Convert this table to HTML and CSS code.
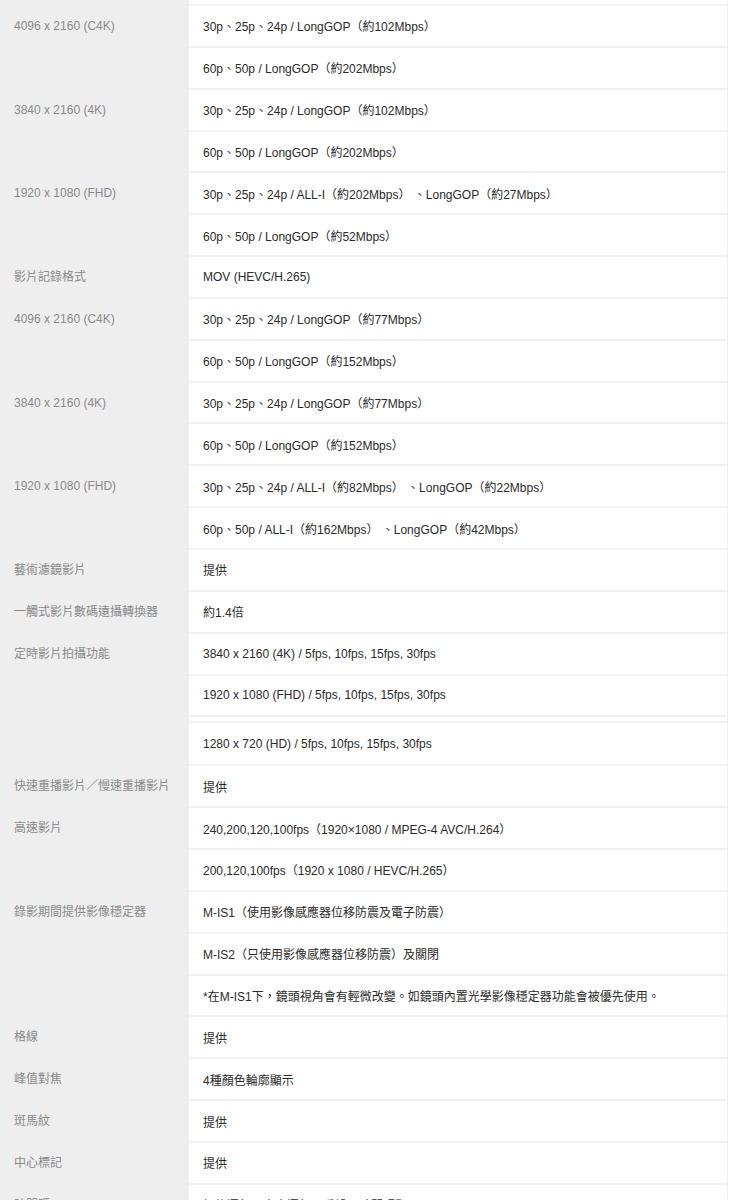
FILE: index.html
```html
<!DOCTYPE html>
<html lang="zh-Hant">
<head>
  <meta charset="UTF-8" />
  <title>規格</title>
  <link rel="stylesheet" href="styles.css">
</head>
<body>
  <div class="specs">
    <div class="group">
      <div class="label"></div>
      <div class="vals"><div class="val gap"></div></div>
    </div>
    <div class="group">
      <div class="label">4096 x 2160 (C4K)</div>
      <div class="vals">
        <div class="val">30p、25p、24p / LongGOP（約102Mbps）</div>
        <div class="val">60p、50p / LongGOP（約202Mbps）</div>
      </div>
    </div>
    <div class="group">
      <div class="label">3840 x 2160 (4K)</div>
      <div class="vals">
        <div class="val">30p、25p、24p / LongGOP（約102Mbps）</div>
        <div class="val">60p、50p / LongGOP（約202Mbps）</div>
      </div>
    </div>
    <div class="group">
      <div class="label">1920 x 1080 (FHD)</div>
      <div class="vals">
        <div class="val">30p、25p、24p / ALL-I（約202Mbps）&nbsp;、LongGOP（約27Mbps）</div>
        <div class="val">60p、50p / LongGOP（約52Mbps）</div>
      </div>
    </div>
    <div class="group">
      <div class="label">影片記錄格式</div>
      <div class="vals">
        <div class="val">MOV (HEVC/H.265)</div>
      </div>
    </div>
    <div class="group">
      <div class="label">4096 x 2160 (C4K)</div>
      <div class="vals">
        <div class="val">30p、25p、24p / LongGOP（約77Mbps）</div>
        <div class="val">60p、50p / LongGOP（約152Mbps）</div>
      </div>
    </div>
    <div class="group">
      <div class="label">3840 x 2160 (4K)</div>
      <div class="vals">
        <div class="val">30p、25p、24p / LongGOP（約77Mbps）</div>
        <div class="val">60p、50p / LongGOP（約152Mbps）</div>
      </div>
    </div>
    <div class="group">
      <div class="label">1920 x 1080 (FHD)</div>
      <div class="vals">
        <div class="val">30p、25p、24p / ALL-I（約82Mbps）&nbsp;、LongGOP（約22Mbps）</div>
        <div class="val">60p、50p / ALL-I（約162Mbps）&nbsp;、LongGOP（約42Mbps）</div>
      </div>
    </div>
    <div class="group">
      <div class="label">藝術濾鏡影片</div>
      <div class="vals"><div class="val">提供</div></div>
    </div>
    <div class="group">
      <div class="label">一觸式影片數碼遠攝轉換器</div>
      <div class="vals"><div class="val">約1.4倍</div></div>
    </div>
    <div class="group">
      <div class="label">定時影片拍攝功能</div>
      <div class="vals">
        <div class="val">3840 x 2160 (4K) / 5fps, 10fps, 15fps, 30fps</div>
        <div class="val">1920 x 1080 (FHD) / 5fps, 10fps, 15fps, 30fps</div>
        <div class="val gap"></div>
        <div class="val tall">1280 x 720 (HD) / 5fps, 10fps, 15fps, 30fps</div>
      </div>
    </div>
    <div class="group">
      <div class="label">快速重播影片／慢速重播影片</div>
      <div class="vals"><div class="val">提供</div></div>
    </div>
    <div class="group">
      <div class="label">高速影片</div>
      <div class="vals">
        <div class="val">240,200,120,100fps（1920×1080 / MPEG-4 AVC/H.264）</div>
        <div class="val">200,120,100fps（1920 x 1080 / HEVC/H.265）</div>
      </div>
    </div>
    <div class="group">
      <div class="label">錄影期間提供影像穩定器</div>
      <div class="vals">
        <div class="val">M-IS1（使用影像感應器位移防震及電子防震）</div>
        <div class="val">M-IS2（只使用影像感應器位移防震）及關閉</div>
        <div class="val">*在M-IS1下，鏡頭視角會有輕微改變。如鏡頭內置光學影像穩定器功能會被優先使用。</div>
      </div>
    </div>
    <div class="group">
      <div class="label">格線</div>
      <div class="vals"><div class="val">提供</div></div>
    </div>
    <div class="group">
      <div class="label">峰值對焦</div>
      <div class="vals"><div class="val">4種顏色輪廓顯示</div></div>
    </div>
    <div class="group">
      <div class="label">斑馬紋</div>
      <div class="vals"><div class="val">提供</div></div>
    </div>
    <div class="group">
      <div class="label">中心標記</div>
      <div class="vals"><div class="val">提供</div></div>
    </div>
    <div class="group">
      <div class="label">時間碼</div>
      <div class="vals"><div class="val">記錄運行、自由運行、重設、時間碼顯示</div></div>
    </div>
  </div>
</body>
</html>
```

FILE: styles.css
```css
body { margin: 0; background: #fff; font-family: "Liberation Sans", Arial, "Noto Sans CJK TC", sans-serif; }
.specs { width: 727px; border-right: 1px solid #eee; }
.group { display: flex; }
.label {
  width: 175px; flex: none;
  background: #eee;
  color: #8a8a8a;
  font-size: 12px;
  padding: 0 0 0 14px;
  line-height: 40px;
}
.vals { flex: 1; }
.val {
  height: 41.85px;
  box-sizing: border-box;
  display: flex; align-items: center;
  padding: 0 14px;
  border-bottom: 2px solid #f2f2f2;
  color: #2a2a2a;
  font-size: 12px;
}
.val.gap { height: 6px; }
.val.tall { height: 43px; }
```
